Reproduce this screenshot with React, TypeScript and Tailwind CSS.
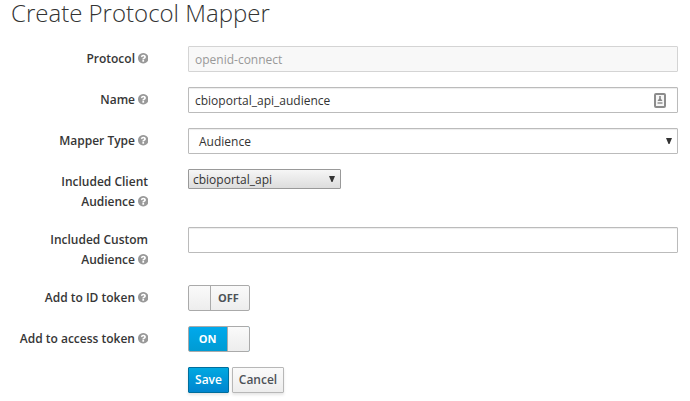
import type { ReactNode } from "react";

function HelpIcon() {
  return (
    <svg className="mb-px ml-[2.5px] size-[10.5px]" viewBox="0 0 1536 1536" fill="#999">
      <path d="M896 1248v-192q0-14-9-23t-23-9H672q-14 0-23 9t-9 23v192q0 14 9 23t23 9h192q14 0 23-9t9-23zm256-672q0-88-55.500-163t-138.500-116-170-41q-243 0-371 213-15 24 8 42l132 100q7 6 19 6 16 0 25-12 53-68 86-92 34-24 86-24 48 0 85.500 26t37.500 59q0 38-20 61t-68 45q-63 28-115.500 86.500T640 892v36q0 14 9 23t23 9h192q14 0 23-9t9-23q0-19 21.500-49.500T972 829q32-18 49-28.500t46-35 44.500-48 28-60.500 12.500-81zm384 192q0 209-103 385.500T1153.500 1433 768 1536t-385.500-103T103 1153.500 0 768t103-385.500T382.500 103 768 0t385.500 103T1433 382.500 1536 768z" />
    </svg>
  );
}

function Field({ lines, children }: { lines: string[]; children: ReactNode }) {
  return (
    <div className="mb-[15px] flex items-start">
      <label className="w-[148px] shrink-0 pt-[3px] text-right font-semibold whitespace-nowrap text-[#363636]">
        {lines.map((line, i) => (
          <span key={line} className="flex h-5 items-center justify-end leading-5">
            {line}
            {i === lines.length - 1 && <HelpIcon />}
          </span>
        ))}
      </label>
      <div className="ml-10 flex w-[490px] shrink-0">{children}</div>
    </div>
  );
}

const inputBox =
  "flex h-[26px] w-full items-center rounded-[1px] border border-[#bbb] bg-white px-[6px] pt-px text-[#333] shadow-[inset_0_1px_1px_rgba(0,0,0,0.075)]";

function Arrow() {
  return (
    <svg className="mr-[-1px] mb-[2px] h-[6px] w-[6px]" viewBox="0 0 6 6" fill="#333">
      <path d="M0 0H6L3.500 6H2.500Z" />
    </svg>
  );
}

function CardIcon() {
  return (
    <svg className="mr-[5px] h-[15px] w-[12px]" viewBox="0 0 12 15">
      <rect x="1" y="1" width="10" height="13" rx="1" fill="#f6f6f6" stroke="#8c8c8c" strokeWidth="2" />
      <path d="M5.200 3h1.600v2.500L8.500 8h-5l1.700-2.500z" fill="#888" />
      <path d="M3.500 9h5v2h-5z" fill="#aaa" />
    </svg>
  );
}

export default function App() {
  return (
    <main className="h-[401px] w-[690px] overflow-hidden bg-white font-['Open_Sans',sans-serif] text-[12px] leading-5">
      <h1 className="mb-[16px] h-[30px] pl-[11px] text-[24px] leading-[26px] font-light text-[#333]">
        Create Protocol Mapper
      </h1>
      <form>
        <Field lines={["Protocol"]}>
          <div className="flex h-[26px] w-full items-center rounded-[1px] border border-[#d4d4d4] bg-[#f8f8f8] px-[6px] pt-px text-[#999]">
            openid-connect
          </div>
        </Field>
        <Field lines={["Name"]}>
          <div className={inputBox}>
            <span className="flex-1">cbioportal_api_audience</span>
            <CardIcon />
          </div>
        </Field>
        <Field lines={["Mapper Type"]}>
          <div className={inputBox}>
            <span className="flex-1 pl-1">Audience</span>
            <Arrow />
          </div>
        </Field>
        <Field lines={["Included Client", "Audience"]}>
          <div className="flex h-5 w-[153px] items-center rounded-[1px] border border-[#999] bg-linear-to-b from-[#f6f6f6] to-[#dddddd] pt-px pr-[6px] pl-1 text-[#333]">
            <span className="flex-1">cbioportal_api</span>
            <Arrow />
          </div>
        </Field>
        <Field lines={["Included Custom", "Audience"]}>
          <div className={inputBox} />
        </Field>
        <Field lines={["Add to ID token"]}>
          <div className="flex h-[26px] w-[62px] overflow-hidden rounded-[2px] border border-[#aaa] bg-linear-to-b from-[#fafafa] to-[#ededed] text-[11px] font-bold text-[#4d5258]">
            <span className="w-[22px] border-r border-[#aaa]" />
            <span className="flex flex-1 items-center justify-center pr-[3px]">OFF</span>
          </div>
        </Field>
        <Field lines={["Add to access token"]}>
          <div className="flex h-[26px] w-[62px] overflow-hidden rounded-[2px] border border-[#aaa] bg-linear-to-b from-[#00a9ec] to-[#009bd3] text-[11px] font-bold text-white">
            <span className="flex flex-1 items-center justify-center pr-px">ON</span>
            <span className="w-[22px] border-l border-[#aaa] bg-linear-to-b from-[#fafafa] to-[#ededed]" />
          </div>
        </Field>
        <div className="ml-[188px] flex gap-[3px] font-semibold">
          <button
            type="button"
            className="h-[26px] w-[41px] rounded-[1px] border border-[#006e9c] bg-linear-to-b from-[#00a8e1] to-[#0085cf] text-white shadow-[0_2px_3px_rgba(0,0,0,0.1)]"
          >
            Save
          </button>
          <button
            type="button"
            className="h-[26px] w-[52px] rounded-[1px] border border-[#b7b7b7] bg-linear-to-b from-[#fafafa] to-[#ededed] text-[#4d5258] shadow-[0_2px_3px_rgba(0,0,0,0.1)]"
          >
            Cancel
          </button>
        </div>
      </form>
    </main>
  );
}
